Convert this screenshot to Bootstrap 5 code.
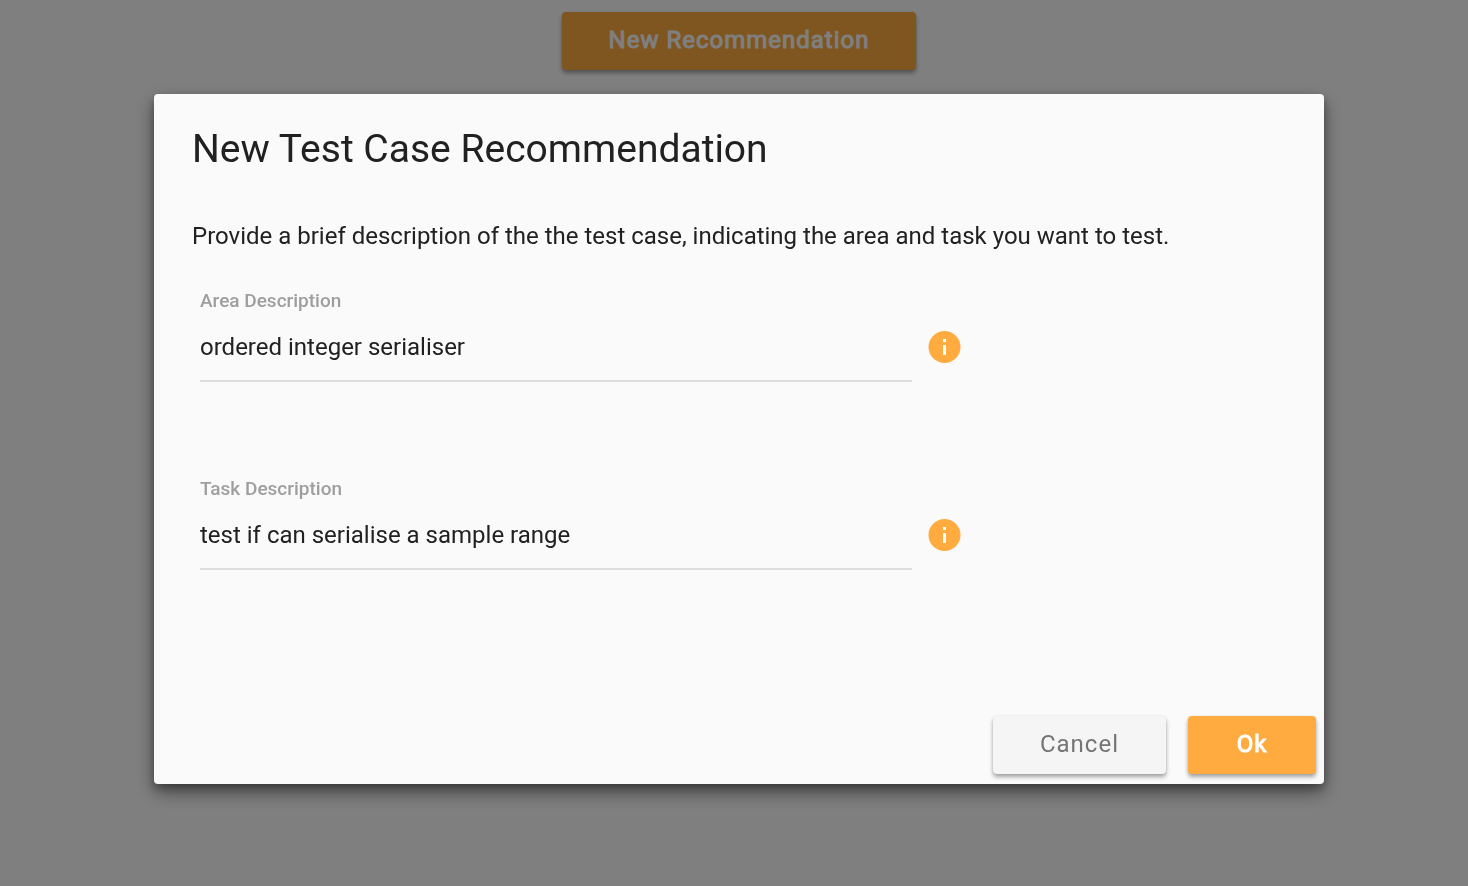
<!DOCTYPE html>
<html lang="en">
<head>
<meta charset="utf-8">
<meta name="viewport" content="width=device-width, initial-scale=1">
<title>New Test Case Recommendation</title>
<link href="https://cdn.jsdelivr.net/npm/bootstrap@5.3.0/dist/css/bootstrap.min.css" rel="stylesheet">
<style>
  body { font-family: Roboto, sans-serif; font-size: 24px; line-height: 32px; color: #212121; }
  .page-inset { padding-left: 10px; }
  .page-top { padding-top: 12px; }
  .btn-raised {
    --bs-btn-font-size: 24px; --bs-btn-line-height: 32px; --bs-btn-font-weight: 400;
    --bs-btn-border-width: 0; --bs-btn-border-radius: 4px;
    min-width: 128px; padding: 12px 47px 14px; letter-spacing: 1px;
    box-shadow: 0 3px 4px rgba(0, 0, 0, .35), 0 0 2px rgba(0, 0, 0, .08);
  }
  .btn-accent {
    --bs-btn-bg: #ffab40; --bs-btn-color: #fff; --bs-btn-hover-bg: #fb9d25; --bs-btn-hover-color: #fff;
    -webkit-text-stroke: 1px #fff;
  }
  .btn-plain { --bs-btn-bg: #f5f5f5; --bs-btn-color: #757575; --bs-btn-hover-bg: #ececec; }
  .modal-dialog { max-width: 1170px; margin: 94px auto 0; }
  .modal-content {
    --bs-modal-bg: #fafafa; min-height: 690px; border: 0; border-radius: 4px;
    box-shadow: 0 8px 18px rgba(0, 0, 0, .45), 0 4px 8px rgba(0, 0, 0, .25);
  }
  .modal-header { padding: 31px 38px 0; }
  .modal-title { font-size: 39px; line-height: 48px; font-weight: 400; }
  .modal-body { padding: 47px 38px 0; }
  .modal-footer { padding: 0 8px 10px; gap: 22px; }
  .form-area { padding: 37px 8px 0; }
  .field { height: 188px; gap: 16px; }
  .field-input { width: 712px; }
  .field-input .form-label { font-size: 19px; line-height: 24px; font-weight: 500; color: #9e9e9e; }
  .field-input .form-control {
    height: 69px; font-size: 24px; line-height: 32px; color: #212121;
    padding: 8px 0; border-bottom: 2px solid #dedede; background: none;
  }
  .field-input .form-control:focus { border-color: #ffab40; }
  .info-icon { margin-top: 42px; }
</style>
</head>
<body>
<main class="page-inset page-top min-vh-100">
  <div class="d-flex justify-content-center">
    <button type="button" class="btn btn-raised btn-accent">New Recommendation</button>
  </div>
</main>

<div class="modal-backdrop show"></div>
<div class="modal d-block page-inset" role="dialog" aria-modal="true" aria-labelledby="dialog-title">
  <div class="modal-dialog">
    <form class="modal-content">
      <div class="modal-header border-0">
        <h1 class="modal-title" id="dialog-title">New Test Case Recommendation</h1>
      </div>
      <div class="modal-body">
        <p class="mb-0">Provide a brief description of the the test case, indicating the area and task you want to test.</p>
        <div class="form-area">
          <div class="field d-flex align-items-start">
            <div class="field-input">
              <label class="form-label d-block mb-0" for="area">Area Description</label>
              <input class="form-control border-top-0 border-start-0 border-end-0 rounded-0 shadow-none" id="area" type="text" value="ordered integer serialiser">
            </div>
            <svg class="info-icon flex-shrink-0" width="33" height="32" viewBox="0 0 33 32" role="img" aria-label="Area help">
              <circle cx="16.5" cy="16" r="16" fill="#ffab40"/>
              <path d="M15 8h3v3h-3zM15 14h3v10h-3z" fill="#fff"/>
            </svg>
          </div>
          <div class="field d-flex align-items-start">
            <div class="field-input">
              <label class="form-label d-block mb-0" for="task">Task Description</label>
              <input class="form-control border-top-0 border-start-0 border-end-0 rounded-0 shadow-none" id="task" type="text" value="test if can serialise a sample range">
            </div>
            <svg class="info-icon flex-shrink-0" width="33" height="32" viewBox="0 0 33 32" role="img" aria-label="Task help">
              <circle cx="16.5" cy="16" r="16" fill="#ffab40"/>
              <path d="M15 8h3v3h-3zM15 14h3v10h-3z" fill="#fff"/>
            </svg>
          </div>
        </div>
      </div>
      <div class="modal-footer border-0">
        <button type="button" class="btn btn-raised btn-plain m-0">Cancel</button>
        <button type="submit" class="btn btn-raised btn-accent m-0">Ok</button>
      </div>
    </form>
  </div>
</div>
<script src="https://cdn.jsdelivr.net/npm/bootstrap@5.3.0/dist/js/bootstrap.bundle.min.js"></script>
</body>
</html>
